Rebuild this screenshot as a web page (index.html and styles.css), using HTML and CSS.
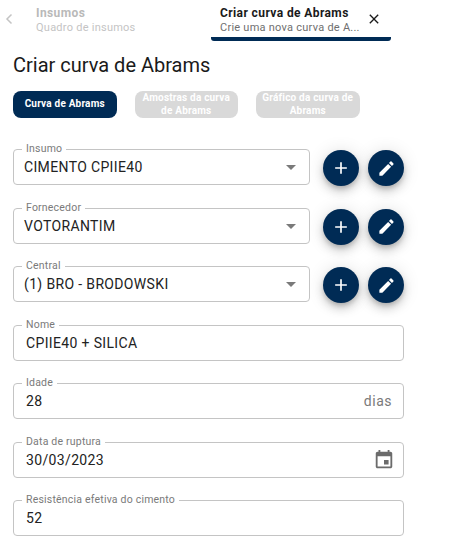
FILE: index.html
```html
<!DOCTYPE html>
<html lang="pt-BR">
<head>
    <meta charset="UTF-8">
    <meta name="viewport" content="width=device-width, initial-scale=1.0">
    <title>Criar curva de Abrams</title>
    <link rel="stylesheet" href="styles.css">
</head>
<body>
    <div class="tabs">
        <svg class="tab-back" viewBox="0 0 10 14" width="10" height="14"><path d="M7.5 2.5 3 7l4.5 4.5" fill="none" stroke="#c4c4c4" stroke-width="1.5"/></svg>
        <div class="tab">
            <div class="tab-title">Insumos</div>
            <div class="tab-sub">Quadro de insumos</div>
        </div>
        <div class="tab tab-active">
            <div class="tab-text">
                <div class="tab-title">Criar curva de Abrams</div>
                <div class="tab-sub">Crie uma nova curva de A...</div>
            </div>
            <svg class="tab-close" viewBox="0 0 24 24" width="16" height="16"><path d="M19 6.41 17.59 5 12 10.59 6.41 5 5 6.41 10.59 12 5 17.59 6.41 19 12 13.41 17.59 19 19 17.59 13.41 12z" fill="#1a1a1a"/></svg>
        </div>
    </div>

    <h1 class="title">Criar curva de Abrams</h1>

    <div class="steps">
        <div class="step step-current">Curva de Abrams</div>
        <div class="step">Amostras da curva de Abrams</div>
        <div class="step">Gráfico da curva de Abrams</div>
    </div>

    <form class="form">
        <div class="row">
            <div class="field field-select">
                <span class="field-label">Insumo</span>
                <span class="field-value">CIMENTO CPIIE40</span>
                <span class="arrow"></span>
            </div>
            <button type="button" class="fab"><svg viewBox="0 0 24 24" width="20" height="20"><path d="M19 13h-6v6h-2v-6H5v-2h6V5h2v6h6z"/></svg></button>
            <button type="button" class="fab"><svg viewBox="0 0 24 24" width="19" height="19"><path d="M3 17.25V21h3.75L17.81 9.94l-3.75-3.75zM20.71 7.04a1 1 0 0 0 0-1.41l-2.34-2.34a1 1 0 0 0-1.41 0l-1.83 1.83 3.75 3.75z"/></svg></button>
        </div>
        <div class="row">
            <div class="field field-select">
                <span class="field-label">Fornecedor</span>
                <span class="field-value">VOTORANTIM</span>
                <span class="arrow"></span>
            </div>
            <button type="button" class="fab"><svg viewBox="0 0 24 24" width="20" height="20"><path d="M19 13h-6v6h-2v-6H5v-2h6V5h2v6h6z"/></svg></button>
            <button type="button" class="fab"><svg viewBox="0 0 24 24" width="19" height="19"><path d="M3 17.25V21h3.75L17.81 9.94l-3.75-3.75zM20.71 7.04a1 1 0 0 0 0-1.41l-2.34-2.34a1 1 0 0 0-1.41 0l-1.83 1.83 3.75 3.75z"/></svg></button>
        </div>
        <div class="row">
            <div class="field field-select">
                <span class="field-label">Central</span>
                <span class="field-value">(1) BRO - BRODOWSKI</span>
                <span class="arrow"></span>
            </div>
            <button type="button" class="fab"><svg viewBox="0 0 24 24" width="20" height="20"><path d="M19 13h-6v6h-2v-6H5v-2h6V5h2v6h6z"/></svg></button>
            <button type="button" class="fab"><svg viewBox="0 0 24 24" width="19" height="19"><path d="M3 17.25V21h3.75L17.81 9.94l-3.75-3.75zM20.71 7.04a1 1 0 0 0 0-1.41l-2.34-2.34a1 1 0 0 0-1.41 0l-1.83 1.83 3.75 3.75z"/></svg></button>
        </div>
        <div class="field field-input">
            <span class="field-label">Nome</span>
            <span class="field-value">CPIIE40 + SILICA</span>
        </div>
        <div class="field field-input">
            <span class="field-label">Idade</span>
            <span class="field-value">28</span>
            <span class="field-unit">dias</span>
        </div>
        <div class="field field-input">
            <span class="field-label">Data de ruptura</span>
            <span class="field-value">30/03/2023</span>
            <svg class="field-icon" viewBox="0 0 24 24" width="22" height="22"><path d="M17 12h-5v5h5zM16 1v2H8V1H6v2H5c-1.11 0-1.99.9-1.99 2L3 19c0 1.1.89 2 2 2h14c1.1 0 2-.9 2-2V5c0-1.1-.9-2-2-2h-1V1zm3 18H5V8h14z" fill="#6b6b6b"/></svg>
        </div>
        <div class="field field-input">
            <span class="field-label">Resistência efetiva do cimento</span>
            <span class="field-value">52</span>
        </div>
    </form>
</body>
</html>
```

FILE: styles.css
```css
*{
    margin: 0;
    padding: 0;
    box-sizing: border-box;
}

html, body{
    height: 545px;
    overflow: hidden;
}

body{
    background: #ffffff;
    font-family: Roboto, "Liberation Sans", sans-serif;
    color: #1f1f1f;
}

.tabs{
    display: flex;
    height: 41px;
    padding-left: 4px;
}

.tab-back{
    margin: 12px 0 0 0;
}

.tab{
    width: 197px;
    padding: 6px 0 0 22px;
}

.tab-title{
    font-size: 12px;
    font-weight: 700;
    line-height: 15px;
    letter-spacing: 0.4px;
    color: #b9b9b9;
}

.tab-sub{
    font-size: 11px;
    line-height: 14px;
    letter-spacing: 0.25px;
    color: #c4c4c4;
    white-space: nowrap;
}

.tab-active{
    display: flex;
    flex: none;
    width: 180px;
    padding: 6px 0 0 9px;
    border-bottom: 4px solid #002B55;
    border-radius: 3px;
}

.tab-active .tab-title{
    color: #1a1a1a;
}

.tab-active .tab-sub{
    color: #6f6f6f;
}

.tab-close{
    flex: none;
    margin: 5px 0 0 6px;
}

.title{
    margin: 11px 0 0 13px;
    font-size: 20px;
    font-weight: 400;
    line-height: 26px;
    color: #1a1a1a;
}

.steps{
    display: flex;
    gap: 18px;
    margin: 13px 0 0 13px;
}

.step{
    display: flex;
    align-items: center;
    justify-content: center;
    width: 103.5px;
    height: 27px;
    padding: 0 5px;
    background: #d9d9d9;
    border-radius: 8px;
    color: #ffffff;
    font-size: 10px;
    font-weight: 700;
    line-height: 12.5px;
    letter-spacing: 0.2px;
    text-align: center;
}

.step-current{
    background: #002B55;
}

.form{
    display: flex;
    flex-direction: column;
    gap: 22.5px;
    width: 391px;
    margin: 31px 0 0 13px;
}

.row{
    display: flex;
    align-items: flex-start;
    gap: 9px;
    height: 36px;
}

.row .field{
    flex: none;
    width: 297px;
    margin-right: 4px;
}

.field{
    position: relative;
    display: flex;
    align-items: center;
    height: 36px;
    border: 1px solid #c4c4c4;
    border-radius: 4px;
    background: #ffffff;
}

.field-select{
    padding-left: 10px;
}

.field-input{
    padding-left: 12px;
}

.field-label{
    position: absolute;
    top: -7px;
    left: 8px;
    padding: 0 4px;
    background: #ffffff;
    font-size: 10.5px;
    line-height: 12px;
    letter-spacing: 0.2px;
    color: #7a7a7a;
}

.field-value{
    font-size: 14px;
    letter-spacing: 0.35px;
    color: #222222;
}

.arrow{
    position: absolute;
    top: 15px;
    right: 13px;
    border-top: 5px solid #7a7a7a;
    border-left: 5px solid transparent;
    border-right: 5px solid transparent;
}

.field-unit{
    margin-left: auto;
    margin-right: 11px;
    font-size: 14px;
    letter-spacing: 0.5px;
    color: #7a7a7a;
}

.field-icon{
    margin-left: auto;
    margin-right: 8px;
}

.fab{
    display: flex;
    align-items: center;
    justify-content: center;
    flex: none;
    width: 36px;
    height: 36px;
    margin-top: 1px;
    border: none;
    border-radius: 50%;
    background: #002B55;
    box-shadow: 0 3px 5px -1px rgba(0,0,0,.2), 0 6px 10px 0 rgba(0,0,0,.14), 0 1px 18px 0 rgba(0,0,0,.12);
}

.fab svg{
    fill: #ffffff;
}
```
